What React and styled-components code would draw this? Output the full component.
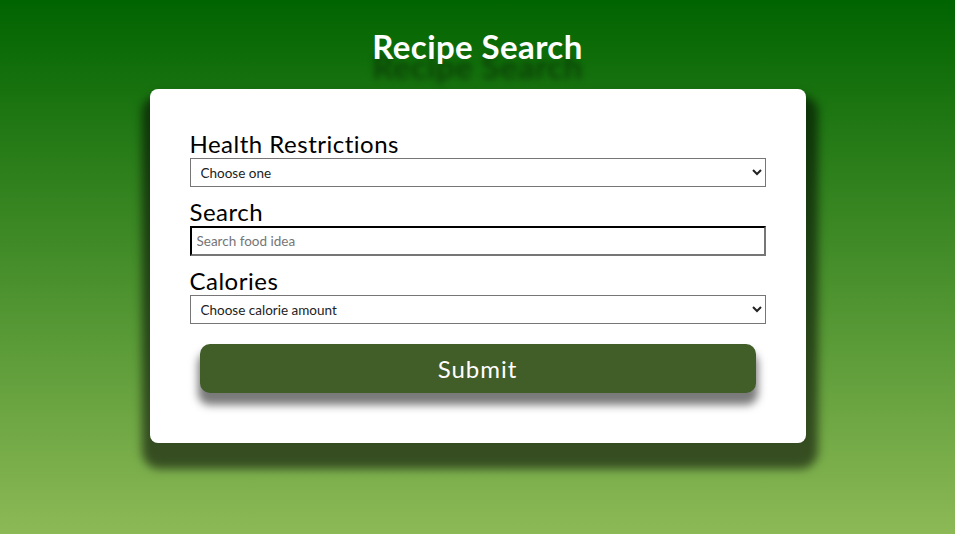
import React from 'react'
import styled, { createGlobalStyle } from 'styled-components'

const GlobalStyle = createGlobalStyle`
    html, body {
        margin: 0;
        padding: 0;
    }
    body {
        font-family: "Lato", "Open Sans", sans-serif;
        background: linear-gradient(#006400, #8cb956);
        min-height: 100vh;
    }
`

const Page = styled.div`
    min-height: 534px;
    display: flex;
    flex-direction: column;
    align-items: center;
    padding-top: 26px;
    box-sizing: border-box;
`
const Title = styled.h1`
    margin: 0 0 23px 0;
    height: 40px;
    line-height: 40px;
    font-size: 33px;
    font-weight: 700;
    letter-spacing: 0.4px;
    color: white;
    text-shadow: 0 20px 6px rgba(0, 0, 0, 0.4);
`
const Card = styled.form`
    width: 656px;
    box-sizing: border-box;
    background-color: white;
    border-radius: 8px;
    padding: 40px;
    box-shadow: 2px 16px 10px 10px rgba(0, 0, 0, 0.55);
    display: flex;
    flex-direction: column;
`
const Label = styled.label`
    font-size: 24px;
    line-height: 29px;
    letter-spacing: 0.5px;
    color: black;
`
const Select = styled.select`
    width: 100%;
    height: 29px;
    box-sizing: border-box;
    border: 1px solid #767676;
    border-radius: 0;
    background: white;
    padding: 0 4px 0 6px;
    font-family: inherit;
    font-size: 13.5px;
    color: #222;
    margin-bottom: ${props => props.last ? '20px' : '10px'};
`
const Input = styled.input`
    width: 100%;
    height: 30px;
    box-sizing: border-box;
    border: 2px inset #767676;
    border-top-color: #1a1a1a;
    border-left-color: #1a1a1a;
    padding: 0 5px;
    font-family: inherit;
    font-size: 13.5px;
    margin-bottom: 10px;
    &::placeholder {
        color: #757575;
    }
`
const Button = styled.button`
    margin: 0 10px 10px 10px;
    height: 49px;
    border: none;
    border-radius: 10px;
    background-color: #415d28;
    color: white;
    font-family: inherit;
    font-size: 24px;
    letter-spacing: 1px;
    box-shadow: 0 10px 8px 2px #7a7a7a;
    cursor: pointer;
`

const App = () => {
    return (
        <Page>
            <GlobalStyle />
            <Title>Recipe Search</Title>
            <Card onSubmit={e => e.preventDefault()}>
                <Label>Health Restrictions</Label>
                <Select defaultValue="">
                    <option value="">Choose one</option>
                    <option>vegan</option>
                    <option>vegetarian</option>
                    <option>gluten-free</option>
                </Select>
                <Label>Search</Label>
                <Input placeholder="Search food idea" />
                <Label>Calories</Label>
                <Select last defaultValue="">
                    <option value="">Choose calorie amount</option>
                    <option>0-500</option>
                    <option>500-1000</option>
                </Select>
                <Button type="submit">Submit</Button>
            </Card>
        </Page>
    )
}

export default App
